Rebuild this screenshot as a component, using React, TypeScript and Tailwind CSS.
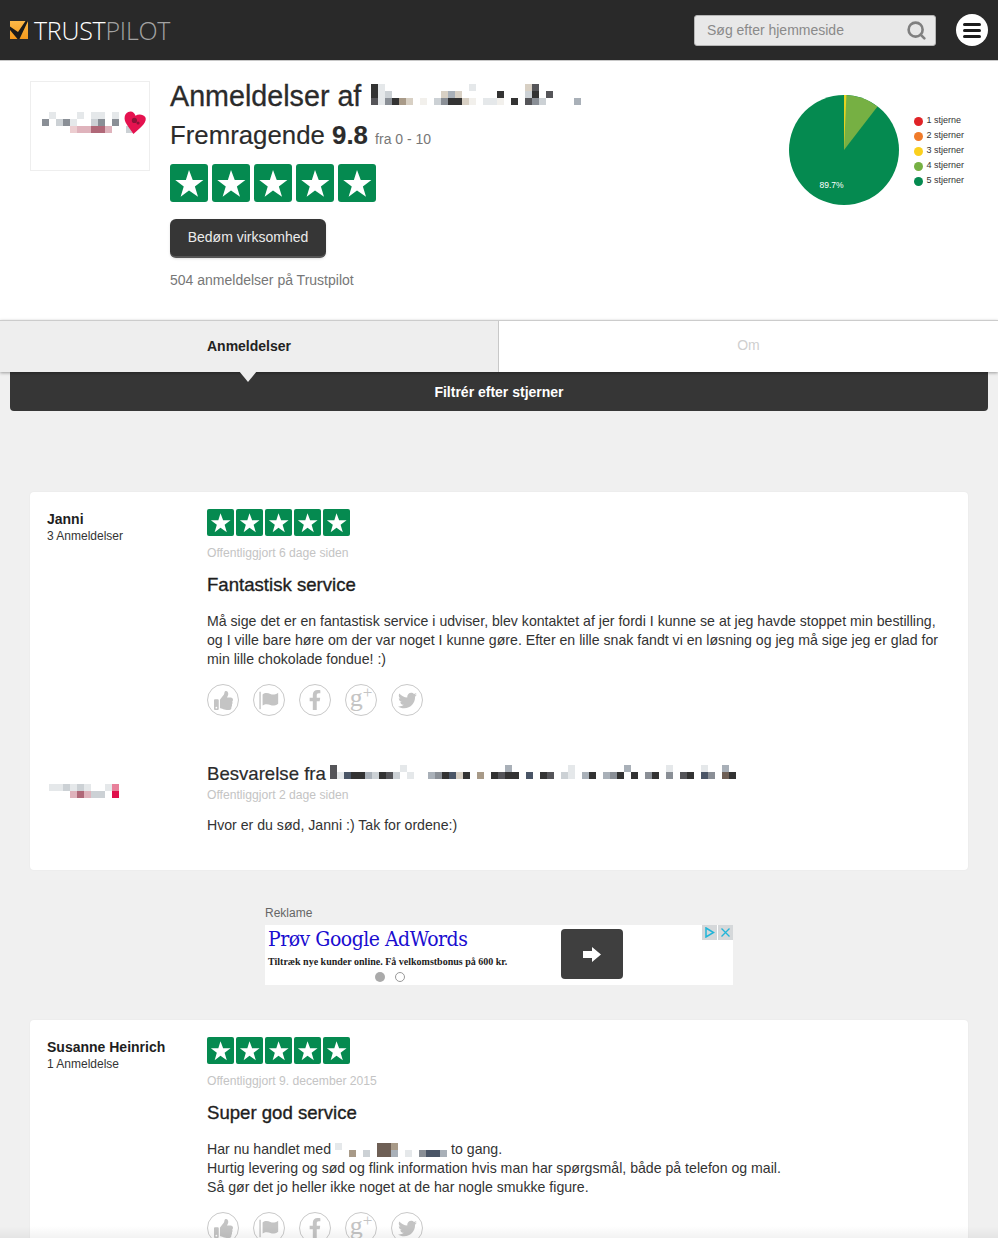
import { Search } from 'lucide-react';
import { FaFacebookF, FaThumbsUp, FaTwitter } from 'react-icons/fa';

const palette: Record<string, string> = {
  a: '#333333',
  b: '#555559',
  c: '#8a8f96',
  d: '#a9b0b8',
  e: '#ccd1d5',
  f: '#e5e8ea',
  g: '#a89a88',
  h: '#d8d0c4',
  i: '#f2f0ec',
  k: '#6e5f55',
  n: '#4a5566',
  p: '#eccdd0',
  q: '#dfb3bc',
  r: '#b06878',
  s: '#e0104c',
  t: '#e8809a',
};

// pixelated redaction blocks, one char per cell
const Mosaic = ({ rows, cell = 7 }: { rows: string[]; cell?: number }) => {
  const cols = Math.max(...rows.map((r) => r.length));
  return (
    <svg width={cols * cell} height={rows.length * cell} shapeRendering="crispEdges" className="shrink-0">
      {rows.map((row, y) =>
        row.split('').map((ch, x) =>
          palette[ch] ? <rect key={`${x}-${y}`} x={x * cell} y={y * cell} width={cell} height={cell} fill={palette[ch]} /> : null
        )
      )}
    </svg>
  );
};

const Stars = ({ big }: { big?: boolean }) => (
  <div className={big ? 'flex gap-1' : 'flex gap-0.5'}>
    {[0, 1, 2, 3, 4].map((i) => (
      <div
        key={i}
        className={
          big
            ? 'w-[38px] h-[38px] rounded-[3px] bg-[#058a50] flex items-center justify-center'
            : 'w-[27px] h-[27px] rounded-[2px] bg-[#058a50] flex items-center justify-center'
        }
      >
        <svg viewBox="0 0 24 24" className={big ? 'w-[30px] h-[30px]' : 'w-[21px] h-[21px]'} fill="#fff">
          <path d="M12 1.500l3 8h8.500l-6.800 5.200 2.500 8.300L12 18l-6.700 5 2.500-8.300L1 9.500h8.500z" />
        </svg>
      </div>
    ))}
  </div>
);

const ActionCircle = ({ children }: { children: React.ReactNode }) => (
  <div className="w-8 h-8 rounded-full border border-[#c9c9c9] text-[#c4c4c4] flex items-center justify-center">
    {children}
  </div>
);

const Actions = () => (
  <div className="flex gap-[14px]">
    <ActionCircle>
      <FaThumbsUp className="w-[19px] h-[19px]" />
    </ActionCircle>
    <ActionCircle>
      <svg viewBox="0 0 24 24" className="w-[22px] h-[22px]" fill="currentColor">
        <rect x="1.500" y="3" width="1.500" height="19" />
        <path d="M5 6c3-2.500 6-1.500 8.500-.5s5 1 8.500-1.500v12c-3.500 2.500-6 2.500-8.500 1.500S8 16 5 18z" />
      </svg>
    </ActionCircle>
    <ActionCircle>
      <FaFacebookF className="w-5 h-5" />
    </ActionCircle>
    <ActionCircle>
      <span className="font-['Liberation_Serif',serif] text-[26px] leading-none -mt-[6px] whitespace-nowrap">
        g<span className="text-[17px] align-[8px]">+</span>
      </span>
    </ActionCircle>
    <ActionCircle>
      <FaTwitter className="w-[19px] h-[19px]" />
    </ActionCircle>
  </div>
);

const legend = [
  { label: '1 stjerne', color: 'bg-[#e02327]' },
  { label: '2 stjerner', color: 'bg-[#f07b2a]' },
  { label: '3 stjerner', color: 'bg-[#fbd01e]' },
  { label: '4 stjerner', color: 'bg-[#76b043]' },
  { label: '5 stjerner', color: 'bg-[#058a50]' },
];

const Pie = () => (
  <div className="self-start flex items-center gap-[15px] mt-[14px] mr-[34px]">
    <svg width="110" height="110" viewBox="-55 -55 110 110">
      <circle r="55" fill="#058a50" />
      <path d="M0 0L0 -55A55 55 0 0 1 33.500 -43.600Z" fill="#76b043" />
      <path d="M0 0L0 -55A55 55 0 0 1 2.400 -55Z" fill="#e6d320" />
      <text x="-12.500" y="38" textAnchor="middle" fontSize="8.500" fill="#fff" fontFamily="Liberation Sans, sans-serif">
        89.7%
      </text>
    </svg>
    <div className="flex flex-col gap-[5px] mt-[2px]">
      {legend.map((l) => (
        <div key={l.label} className="flex items-center gap-[3px] h-[10px] text-[9px] text-[#333]">
          <span className={`w-[9px] h-[9px] rounded-full ${l.color}`} />
          {l.label}
        </div>
      ))}
    </div>
  </div>
);

const Header = () => (
  <header className="h-[61px] bg-[#292929] border-b border-[#c8c8c8] flex items-center justify-between pl-[10px] pr-[10px]">
    <div className="flex items-center gap-[6px]">
      <svg width="18" height="18" viewBox="0 0 18 18">
        <defs>
          <linearGradient id="logoFill" x1="0" y1="0" x2="0" y2="1">
            <stop offset="0" stopColor="#fcb848" />
            <stop offset="1" stopColor="#f59a1c" />
          </linearGradient>
        </defs>
        <rect width="18" height="18" fill="url(#logoFill)" />
        <path d="M0 5.500L8 11 15.500 0H18L9.500 18H7.500L0 9z" fill="#1a1a1a" />
      </svg>
      <span className="font-['Open_Sans',sans-serif] font-light text-[25px] leading-none tracking-[-0.25px] text-white">
        TRUST<span className="text-[#a3a3a3]">PILOT</span>
      </span>
    </div>
    <div className="flex items-center gap-5">
      <div className="w-[242px] h-[31px] rounded-[3px] bg-[#e8e8e8] border border-[#b5b5b5] flex items-center justify-between pl-[12px] pr-[8px]">
        <span className="text-[14px] text-[#8a8a8a]">Søg efter hjemmeside</span>
        <Search className="w-[21px] h-[21px] text-[#808080]" strokeWidth={3} />
      </div>
      <div className="w-8 h-8 rounded-full bg-white flex flex-col items-center justify-center gap-[3px]">
        <span className="w-[18px] h-[3px] rounded-sm bg-[#1c1c1c]" />
        <span className="w-[18px] h-[3px] rounded-sm bg-[#1c1c1c]" />
        <span className="w-[18px] h-[3px] rounded-sm bg-[#1c1c1c]" />
      </div>
    </div>
  </header>
);

const Hero = () => (
  <section className="h-[259px] bg-white flex justify-between pl-[30px] pt-[20px]">
    <div className="flex gap-5">
      <div className="relative w-[120px] h-[90px] border border-[#eeeeee] pl-[11px] pt-[30px]">
        <Mosaic rows={['.f...f.ff.f', 'c.ecf..ec.c', '....pqqrrq..e']} />
        <svg viewBox="0 0 26 26" className="absolute left-[92px] top-[28px] w-[27px] h-[27px]">
          <path d="M5 2c3.500-1.500 6 .5 7 3.500 3-2 7.500-1.500 9.500 1.500 2 4-3 9-11.500 16C7 18 1.500 13 1.500 8 1.500 5 3 3 5 2z" fill="#e5124f" />
          <circle cx="11" cy="10" r="2.500" fill="#8e1238" />
          <circle cx="14.500" cy="12.500" r="1.500" fill="#8e1238" />
        </svg>
      </div>
      <div className="-mt-[1px]">
        <div className="flex items-start h-[34px]">
          <h1 className="text-[28.700px] leading-[32px] text-[#2b2b2b] whitespace-nowrap [-webkit-text-stroke:0.3px]">
            Anmeldelser af
          </h1>
          <div className="ml-[10px] mt-[4px]">
            <Mosaic
              rows={[
                'af............f.......hb',
                'afe.......hdh.....a...ea.b',
                'bfcagh.i.ecaahi.ffi.a.bce....d',
              ]}
            />
          </div>
        </div>
        <p className="text-[25.800px] leading-[30px] mt-[6px] text-[#2b2b2b] whitespace-nowrap [-webkit-text-stroke:0.15px]">
          Fremragende <span className="font-bold">9.8</span>{' '}
          <span className="text-[14px] text-[#777] [-webkit-text-stroke:0]">fra 0 - 10</span>
        </p>
        <div className="mt-[10px]">
          <Stars big />
        </div>
        <button className="mt-[17px] w-[156px] h-[39px] rounded-[6px] bg-[#363636] border-b-2 border-[#555] text-[14px] text-[#ececec] shadow-sm">
          Bedøm virksomhed
        </button>
        <p className="mt-[13px] text-[14px] leading-[18px] text-[#777]">504 anmeldelser på Trustpilot</p>
      </div>
    </div>
    <Pie />
  </section>
);

const Tabs = () => (
  <div className="relative z-10 h-[52px] flex border-t border-[#cccccc] bg-white shadow-[0_1px_3px_rgba(0,0,0,0.35)]">
    <div className="w-[499px] bg-[#eeeeee] border-r border-[#c8c8c8] flex items-center justify-center text-[14px] font-bold text-[#222]">
      Anmeldelser
    </div>
    <div className="flex-1 flex items-center justify-center pb-[2px] text-[14px] text-[#cfcfcf]">Om</div>
    <span className="absolute left-[239px] top-[50px] w-0 h-0 border-x-[9px] border-x-transparent border-t-[11px] border-t-[#eeeeee]" />
  </div>
);

const ReviewCard = ({
  name,
  count,
  date,
  title,
  children,
  reply,
}: {
  name: string;
  count: string;
  date: string;
  title: string;
  children: React.ReactNode;
  reply?: React.ReactNode;
}) => (
  <article className="mx-[30px] bg-white rounded-[4px] shadow-[0_0_2px_rgba(0,0,0,0.06)] pl-[17px] pt-[17px]">
    <div className="flex">
      <div className="w-[160px] shrink-0 pt-px">
        <p className="text-[14px] leading-[18px] font-bold text-[#1e1e1e]">{name}</p>
        <p className="text-[12px] leading-[16px] text-[#333]">{count}</p>
      </div>
      <div className="flex-1">
        <Stars />
        <p className="mt-[9px] text-[12.150px] leading-[16px] text-[#c4c4c4]">{date}</p>
        <h2 className="mt-[12px] text-[18.600px] leading-[24px] text-[#1e1e1e] [-webkit-text-stroke:0.35px]">{title}</h2>
        <div className="mt-[15px] text-[14.130px] leading-[19px] text-[#333] whitespace-nowrap">{children}</div>
        <div className="mt-[15px]">
          <Actions />
        </div>
      </div>
    </div>
    {reply}
  </article>
);

const Reply = () => (
  <div className="flex mt-[47px] pb-[35px]">
    <div className="w-[160px] shrink-0 pl-[2px] pt-[21px]">
      <Mosaic rows={['ffefef..ft', '...qrqee.s']} />
    </div>
    <div>
      <div className="flex items-center h-[21px]">
        <h3 className="text-[18.600px] leading-[21px] text-[#2b2b2b] whitespace-nowrap [-webkit-text-stroke:0.2px]">
          Besvarelse fra
        </h3>
        <div className="ml-[4px] -mt-[3px]">
          <Mosaic
            rows={[
              'b.........f..............d........f.......d.....f....f..d.',
              'bfnaadeabe.f..dcanha.g.abaa.n.ab.ef.da.dca.a.ca.c.ba.nc.ka',
            ]}
          />
        </div>
      </div>
      <p className="mt-[3px] text-[12.150px] leading-[16px] text-[#c4c4c4]">Offentliggjort 2 dage siden</p>
      <p className="mt-[13px] text-[14.130px] leading-[19px] text-[#333]">Hvor er du sød, Janni :) Tak for ordene:)</p>
    </div>
  </div>
);

const Ad = () => (
  <div className="mt-[36px] mx-auto w-[468px]">
    <p className="text-[12px] leading-[14px] text-[#666] mb-[5px]">Reklame</p>
    <div className="relative h-[60px] bg-white flex pl-[3px] font-['Liberation_Serif',serif]">
      <div className="w-[293px]">
        <p className="font-['DejaVu_Serif',serif] [font-stretch:condensed] text-[21px] leading-[28px] tracking-[-0.5px] text-[#1a0dd0] whitespace-nowrap">
          Prøv Google AdWords
        </p>
        <p className="mt-[2px] text-[10px] leading-[14px] font-bold text-[#222] whitespace-nowrap">
          Tiltræk nye kunder online. Få velkomstbonus på 600 kr.
        </p>
      </div>
      <div className="mt-[4px] w-[62px] h-[50px] rounded-[4px] bg-[#3f3f3f] flex items-center justify-center">
        <svg width="18" height="15" viewBox="0 0 18 15" fill="#fff">
          <path d="M0 4h9V0l9 7.500-9 7.500v-4H0z" />
        </svg>
      </div>
      <div className="absolute top-0 right-0 flex gap-px">
        <div className="w-[15px] h-[15px] bg-[#d5d8da] flex items-center justify-center">
          <svg width="11" height="11" viewBox="0 0 11 11" fill="none" stroke="#21b5d8" strokeWidth="1.500">
            <path d="M2 1l7.500 4.500L2 10z" />
          </svg>
        </div>
        <div className="w-[15px] h-[15px] bg-[#d5d8da] flex items-center justify-center">
          <svg width="11" height="11" viewBox="0 0 11 11" fill="none" stroke="#21b5d8" strokeWidth="1.300">
            <path d="M1.500 1.500l8 8M9.500 1.500l-8 8" />
          </svg>
        </div>
      </div>
      <div className="absolute left-[110px] bottom-[3px] flex gap-[10px]">
        <span className="w-[10px] h-[10px] rounded-full bg-[#aaaaaa]" />
        <span className="w-[10px] h-[10px] rounded-full border border-[#999] bg-white" />
      </div>
    </div>
  </div>
);

export default function App() {
  return (
    <div className="relative h-[1238px] overflow-hidden bg-[#f0f0f0] font-['Liberation_Sans',sans-serif]">
      <Header />
      <Hero />
      <Tabs />
      <div className="mx-[10px] h-[39px] rounded-b-[4px] bg-[#363636] flex items-center justify-center pt-[2px] text-[14px] font-bold text-white">
        Filtrér efter stjerner
      </div>

      <div className="mt-[81px]">
        <ReviewCard
          name="Janni"
          count="3 Anmeldelser"
          date="Offentliggjort 6 dage siden"
          title="Fantastisk service"
          reply={<Reply />}
        >
          Må sige det er en fantastisk service i udviser, blev kontaktet af jer fordi I kunne se at jeg havde stoppet min bestilling,
          <br />
          og I ville bare høre om der var noget I kunne gøre. Efter en lille snak fandt vi en løsning og jeg må sige jeg er glad for
          <br />
          min lille chokolade fondue! :)
        </ReviewCard>
      </div>

      <Ad />

      <div className="mt-[35px]">
        <ReviewCard
          name="Susanne Heinrich"
          count="1 Anmeldelse"
          date="Offentliggjort 9. december 2015"
          title="Super god service"
        >
          <span className="inline-flex items-center align-top h-[19px]">
            Har nu handlet med
            <span className="mx-[4px]">
              <Mosaic rows={['f.....kkg.......', '..g.e.kkd.f.cnnd']} />
            </span>
            to gang.
          </span>
          <br />
          Hurtig levering og sød og flink information hvis man har spørgsmål, både på telefon og mail.
          <br />
          Så gør det jo heller ikke noget at de har nogle smukke figure.
        </ReviewCard>
      </div>

      <div className="absolute inset-x-0 bottom-0 h-[12px] bg-gradient-to-b from-transparent to-black/5" />
    </div>
  );
}
